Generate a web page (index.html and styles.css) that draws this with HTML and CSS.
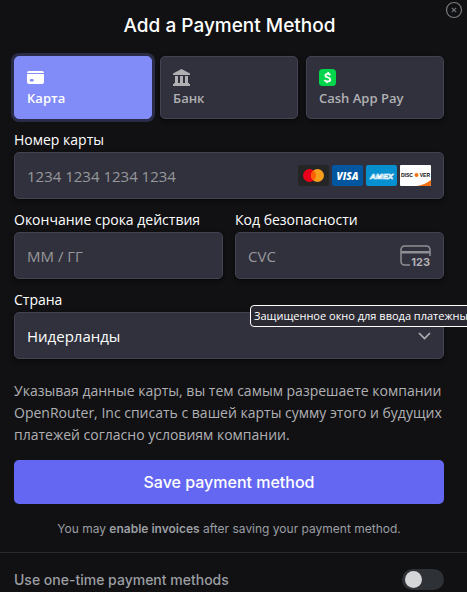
FILE: index.html
```html
<!DOCTYPE html>
<html lang="ru">
<head>
<meta charset="utf-8">
<meta name="viewport" content="width=device-width, initial-scale=1">
<title>Add a Payment Method</title>
<link rel="stylesheet" href="styles.css">
</head>
<body>
<main class="dialog">
  <button class="close" type="button" aria-label="Close">
    <svg width="18" height="18" viewBox="0 0 18 18" fill="none" stroke="currentColor"><circle cx="9" cy="9" r="7.5" stroke-width="1.2"/><path d="M6.8 6.8l4.4 4.4M11.2 6.8l-4.4 4.4" stroke-width="1.1"/></svg>
  </button>
  <h1 class="title" lang="en">Add a Payment Method</h1>
  <form class="form">
    <div class="tabs">
      <button class="tab tab-selected" type="button">
        <svg width="17" height="17" viewBox="0 0 17 17"><path fill="currentColor" fill-rule="evenodd" d="M0 4a2 2 0 0 1 2-2h13a2 2 0 0 1 2 2H0zM0 5h17v8a2 2 0 0 1-2 2H2a2 2 0 0 1-2-2zM4 10a1 1 0 0 0 0 2.500h1.500a1 1 0 0 0 0-2.500z"/></svg>
        <span>Карта</span>
      </button>
      <button class="tab" type="button">
        <svg width="17" height="17" viewBox="0 0 17 17" fill="currentColor"><path d="M8.500 0L17 4.500V6H0V4.500zM2 7h3v7H2zM7 7h3v7H7zM12 7h3v7h-3zM1 14h15v1h1v2H0v-2h1z"/></svg>
        <span>Банк</span>
      </button>
      <button class="tab" type="button">
        <svg width="17" height="17" viewBox="0 0 17 17"><rect width="17" height="17" rx="3.500" fill="#00d54b"/><path d="M11.500 6C10.600 5.200 9.500 4.800 8.500 4.800c-1.200 0-2.200.5-2.200 1.600 0 2.500 5 1.400 5 4 0 1.300-1.200 2-2.800 2-1.200 0-2.400-.5-3.200-1.400M9.300 3L9 5M8.100 12l-.4 2" fill="none" stroke="#fff" stroke-width="1.800"/></svg>
        <span>Cash App Pay</span>
      </button>
    </div>
    <div class="field">
      <label for="number">Номер карты</label>
      <div class="control">
        <input id="number" type="text" placeholder="1234 1234 1234 1234">
        <div class="brands">
          <svg width="31" height="21" viewBox="0 0 31 21" role="img" aria-label="Mastercard"><rect width="31" height="21" rx="2" fill="#252525"/><circle cx="11.500" cy="10.500" r="6.500" fill="#eb001b"/><circle cx="19.500" cy="10.500" r="6.500" fill="#f79e1b"/><path d="M15.500 5.400a6.500 6.500 0 0 1 0 10.200 6.500 6.500 0 0 1 0-10.200z" fill="#ff5f00"/></svg>
          <svg width="31" height="21" viewBox="0 0 31 21"><rect width="31" height="21" rx="2" fill="#00579f"/><text class="visa" x="15.500" y="14.500" text-anchor="middle">VISA</text></svg>
          <svg width="31" height="21" viewBox="0 0 31 21"><rect width="31" height="21" rx="2" fill="#0690d0"/><text class="amex" x="15.500" y="13.500" text-anchor="middle">AMEX</text></svg>
          <svg width="31" height="21" viewBox="0 0 31 21"><rect width="31" height="21" rx="1" fill="#fff"/><path d="M31 15v5a1 1 0 0 1-1 1H17c6-1 10-3 14-6z" fill="#f47216"/><text class="discover" x="1" y="12">DISC</text><circle cx="16.500" cy="10" r="2" fill="#f47216"/><text class="discover" x="30" y="12" text-anchor="end">VER</text></svg>
        </div>
      </div>
    </div>
    <div class="row">
      <div class="field">
        <label for="expiry">Окончание срока действия</label>
        <div class="control"><input id="expiry" type="text" placeholder="ММ / ГГ"></div>
      </div>
      <div class="field">
        <label for="cvc">Код безопасности</label>
        <div class="control">
          <input id="cvc" type="text" placeholder="CVC">
          <svg class="cvc-icon" width="31" height="22" viewBox="0 0 31 22"><path d="M10 20H4.500A3.500 3.500 0 0 1 1 16.500v-12A3.500 3.500 0 0 1 4.500 1h22A3.500 3.500 0 0 1 30 4.500V11" fill="none" stroke="currentColor" stroke-width="1.500"/><path d="M1 6h29v2.500H1z" fill="currentColor"/><text class="cvc-digits" x="30" y="21" text-anchor="end">123</text></svg>
        </div>
      </div>
    </div>
    <div class="field country">
      <label for="country">Страна</label>
      <div class="control">
        <select id="country"><option>Нидерланды</option></select>
        <svg class="chevron" width="13" height="8" viewBox="0 0 13 8" fill="none" stroke="currentColor" stroke-width="1.600"><path d="M1 1l5.500 5.500L12 1"/></svg>
      </div>
      <div class="tooltip" role="tooltip">Защищенное окно для ввода платежных данных</div>
    </div>
    <p class="terms">Указывая данные карты, вы тем самым разрешаете компании OpenRouter, Inc списать с вашей карты сумму этого и будущих платежей согласно условиям компании.</p>
    <button class="save" type="submit" lang="en">Save payment method</button>
    <p class="note" lang="en">You may <a href="#">enable invoices</a> after saving your payment method.</p>
  </form>
  <div class="one-time" lang="en">
    <label for="one-time">Use one-time payment methods</label>
    <input class="switch" id="one-time" type="checkbox" role="switch">
  </div>
</main>
</body>
</html>
```
FILE: styles.css
```css
* {
  box-sizing: border-box;
}

body {
  margin: 0;
  background: #111113;
  color: #fff;
  font: 14px/20px "Open Sans", "Noto Sans", sans-serif;
}

button,
input,
select {
  font: inherit;
  color: inherit;
}

.dialog {
  position: relative;
  overflow: hidden;
}

.close {
  position: absolute;
  top: 1px;
  right: 4px;
  display: flex;
  padding: 0;
  border: 0;
  background: none;
  color: #777b80;
}

.title {
  margin: 0;
  padding: 12px 8px 0 0;
  text-align: center;
  font: 500 19px/28px Inter, sans-serif;
}

.form {
  padding: 16px 23px 0 14px;
}

.tabs {
  display: grid;
  grid-template-columns: repeat(3, 1fr);
  gap: 8px;
}

.tab {
  display: flex;
  flex-direction: column;
  align-items: flex-start;
  gap: 3px;
  height: 63px;
  padding: 12px;
  border: 1px solid #424353;
  border-radius: 5px;
  background: #30313d;
  color: #b0b0b3;
  box-shadow: 0 2px 4px rgba(0, 0, 0, 0.5);
  font-size: 13px;
  font-weight: 600;
  line-height: 18px;
}

.tab svg {
  flex: none;
}

.tab-selected {
  border-color: #818cf8;
  background: #818cf8;
  color: #fff;
  box-shadow: 0 0 0 3px #292b47;
}

.field {
  margin-top: 11px;
  min-width: 0;
}

.field label {
  display: block;
  margin-bottom: 2px;
}

.row {
  display: grid;
  grid-template-columns: 1fr 1fr;
  gap: 12px;
}

.control {
  display: flex;
  align-items: center;
  height: 47px;
  padding: 0 12px;
  border: 1px solid #424353;
  border-radius: 5px;
  background: #30313d;
  box-shadow: 0 2px 4px rgba(0, 0, 0, 0.5);
}

.control input,
.control select {
  flex: 1;
  min-width: 0;
  padding: 0;
  border: 0;
  outline: 0;
  background: none;
  appearance: none;
  font-size: 15px;
}

.control input::placeholder {
  color: #98989b;
  opacity: 1;
}

.brands {
  display: flex;
  gap: 3px;
}

.visa {
  fill: #fff;
  font: italic 800 10px "Open Sans", sans-serif;
}

.amex {
  fill: #0690d0;
  stroke: #fff;
  stroke-width: 0.7px;
  font: italic 700 8px "Liberation Sans", sans-serif;
}

.discover {
  fill: #111;
  font: 700 5px "Liberation Sans", sans-serif;
}

.cvc-icon {
  color: #8e8e94;
}

.cvc-digits {
  fill: #b0b0b3;
  font: 700 11px Inter, sans-serif;
}

.chevron {
  color: #b0b0b3;
}

.country {
  position: relative;
}

.tooltip {
  position: absolute;
  top: 15px;
  left: 236px;
  padding: 1px 3px;
  border: 1px solid #fff;
  border-radius: 4px;
  background: #2b2a33;
  font-size: 11px;
  line-height: 18px;
  white-space: nowrap;
}

.terms {
  margin: 21px 0 0;
  color: #b0b0b3;
  line-height: 22px;
}

.save {
  display: block;
  width: 100%;
  height: 44px;
  margin-top: 14px;
  border: 0;
  border-radius: 5px;
  background: #6467f2;
  font: 500 16px/24px Inter, sans-serif;
}

.note {
  margin: 16px 0 0;
  color: #9b9ea3;
  text-align: center;
  font: 12px/18px Inter, sans-serif;
}

.note a {
  color: inherit;
  font-weight: 600;
  text-decoration: none;
}

.one-time {
  display: flex;
  align-items: center;
  justify-content: space-between;
  margin-top: 14px;
  padding: 16px 23px 2px 14px;
  border-top: 1px solid #292a2e;
  color: #9b9ea3;
  font: 500 14px/21px Inter, sans-serif;
}

.switch {
  display: flex;
  align-items: center;
  width: 42px;
  height: 21px;
  margin: 0;
  padding: 0 3px;
  border-radius: 11px;
  background: #2e3135;
  appearance: none;
}

.switch::before {
  content: "";
  width: 17px;
  height: 17px;
  border-radius: 50%;
  background: #d5d6d8;
}

.switch:checked {
  justify-content: flex-end;
  background: #6467f2;
}
```
